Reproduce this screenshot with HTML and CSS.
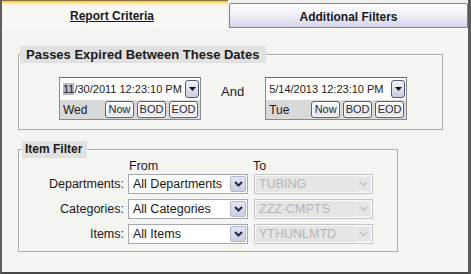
FILE: index.html
```html
<!DOCTYPE html>
<html lang="en">
<head>
    <meta charset="UTF-8">
    <title>Report Criteria</title>
    <link rel="stylesheet" href="styles.css">
</head>
<body>
    <div class="window">
        <div class="tabs">
            <div class="tab tab-active"><span>Report Criteria</span></div>
            <div class="tab">Additional Filters</div>
        </div>
        <div class="panel">
            <fieldset class="group group-dates">
                <legend>Passes Expired Between These Dates</legend>
                <div class="date-row">
                    <div class="datepicker">
                        <div class="dp-input">
                            <span class="dp-text"><span class="dp-sel">11</span>/30/2011 12:23:10 PM</span>
                            <span class="dp-drop"><svg width="7" height="4" viewBox="0 0 7 4"><path d="M0 0H7L3.5 4Z" fill="#111"/></svg></span>
                        </div>
                        <div class="dp-bar">
                            <span class="dp-day">Wed</span>
                            <span class="btn">Now</span><span class="btn">BOD</span><span class="btn">EOD</span>
                        </div>
                    </div>
                    <span class="and">And</span>
                    <div class="datepicker">
                        <div class="dp-input">
                            <span class="dp-text">5/14/2013 12:23:10 PM</span>
                            <span class="dp-drop"><svg width="7" height="4" viewBox="0 0 7 4"><path d="M0 0H7L3.5 4Z" fill="#111"/></svg></span>
                        </div>
                        <div class="dp-bar">
                            <span class="dp-day">Tue</span>
                            <span class="btn">Now</span><span class="btn">BOD</span><span class="btn">EOD</span>
                        </div>
                    </div>
                </div>
            </fieldset>

            <fieldset class="group group-items">
                <legend>Item Filter</legend>
                <div class="filter-grid">
                    <span></span><span class="col-head">From</span><span class="col-head">To</span>

                    <span class="row-label">Departments:</span>
                    <div class="combo"><span>All Departments</span><span class="combo-btn"><svg width="9" height="6" viewBox="0 0 9 6"><path d="M1 1L4.5 4.5L8 1" fill="none" stroke="currentColor" stroke-width="2"/></svg></span></div>
                    <div class="combo combo-disabled"><span>TUBING</span><span class="combo-btn"><svg width="9" height="6" viewBox="0 0 9 6"><path d="M1 1L4.5 4.5L8 1" fill="none" stroke="currentColor" stroke-width="1.5"/></svg></span></div>

                    <span class="row-label">Categories:</span>
                    <div class="combo"><span>All Categories</span><span class="combo-btn"><svg width="9" height="6" viewBox="0 0 9 6"><path d="M1 1L4.5 4.5L8 1" fill="none" stroke="currentColor" stroke-width="2"/></svg></span></div>
                    <div class="combo combo-disabled"><span>ZZZ-CMPTS</span><span class="combo-btn"><svg width="9" height="6" viewBox="0 0 9 6"><path d="M1 1L4.5 4.5L8 1" fill="none" stroke="currentColor" stroke-width="1.5"/></svg></span></div>

                    <span class="row-label">Items:</span>
                    <div class="combo"><span>All Items</span><span class="combo-btn"><svg width="9" height="6" viewBox="0 0 9 6"><path d="M1 1L4.5 4.5L8 1" fill="none" stroke="currentColor" stroke-width="2"/></svg></span></div>
                    <div class="combo combo-disabled"><span>YTHUNLMTD</span><span class="combo-btn"><svg width="9" height="6" viewBox="0 0 9 6"><path d="M1 1L4.5 4.5L8 1" fill="none" stroke="currentColor" stroke-width="1.5"/></svg></span></div>
                </div>
            </fieldset>
        </div>
    </div>
</body>
</html>
```

FILE: styles.css
```css
body {
    margin: 0;
    font-family: "Liberation Sans", Arial, sans-serif;
    color: #1a1a1a;
    background-color: #f4f4f1;
}
.window {
    width: 471px;
    height: 274px;
    box-sizing: border-box;
    border-left: 2px solid #5e5e5e;
    border-right: 3px solid #5a5a5a;
    border-bottom: 2px solid #474747;
    display: flex;
    flex-direction: column;
    background-color: #f4f4f1;
}

/* tabs */
.tabs {
    display: flex;
    height: 28px;
    background-color: #efefef;
}
.tab {
    flex: 1;
    margin-top: 3px;
    box-sizing: border-box;
    border: 1px solid #80808f;
    border-radius: 2px 2px 0 0;
    background: linear-gradient(#fdfdff 0%, #f1f1f9 45%, #d4d4ea 100%);
    box-shadow: 0 1px 0 #fff;
    display: flex;
    align-items: center;
    justify-content: center;
    padding-top: 2px;
    font-size: 12px;
    font-weight: bold;
}
.tab-active {
    flex: none;
    width: 226px;
    margin-top: 0;
    border: none;
    border-top: 1px solid #86703c;
    border-radius: 0;
    background: #f8f8f6;
    box-shadow: inset 0 2px 0 #f5d170, inset 0 4px 2px #fbeec4;
    padding: 3px 6px 0 0;
    margin-right: 1px;
}
.tab-active span {
    text-decoration: underline;
}

/* main panel */
.panel {
    flex: 1;
    padding: 18px 0 0 16px;
}
.group {
    margin: 0;
    padding: 0;
    border: 1px solid #ababab;
    box-shadow: inset 1px 1px 0 #fff;
}
.group legend {
    font-weight: bold;
    line-height: 17px;
    background-color: #e1e1e1;
}
.group-dates {
    width: 425px;
    box-sizing: border-box;
}
.group-dates legend {
    font-size: 13px;
    margin-left: 1px;
    padding: 0 7px 0 6px;
}
.group-items {
    width: 380px;
    box-sizing: border-box;
    margin-top: 11px;
}
.group-items legend {
    font-size: 12px;
    margin-left: 3px;
    padding: 0 5px 0 3px;
}

/* date pickers */
.date-row {
    display: flex;
    align-items: flex-start;
    padding: 14px 0 9px 40px;
}
.datepicker {
    width: 142px;
    box-sizing: border-box;
    border: 1px solid #8a8a8a;
    border-top-color: #6c6c6c;
}
.dp-input {
    height: 22px;
    display: flex;
    align-items: center;
    padding: 0 1px 0 3px;
    background-color: #fff;
    font-size: 11px;
}
.dp-sel {
    background-color: #b9b9c2;
}
.dp-drop {
    margin-left: auto;
    width: 14px;
    height: 18px;
    box-sizing: border-box;
    border: 1px solid #4d5d7a;
    border-radius: 3px;
    background: linear-gradient(#f3f3fa, #c9cce0);
    display: flex;
    align-items: center;
    justify-content: center;
}
.dp-bar {
    height: 19px;
    display: flex;
    align-items: center;
    padding: 0 2px 0 3px;
    background-color: #d9d9d9;
    font-size: 12px;
}
.dp-day {
    margin-right: auto;
}
.btn {
    width: 29px;
    height: 17px;
    box-sizing: border-box;
    margin-left: 3px;
    border: 1px solid #4e6382;
    border-radius: 3px;
    background: linear-gradient(#f7f8fb, #e3e6ee);
    box-shadow: inset 0 0 0 1px #fff;
    font-size: 11px;
    line-height: 15px;
    text-align: center;
    color: #2a2a2a;
}
.and {
    margin: 7px 21px 0 20px;
    font-size: 13px;
}

/* item filter */
.filter-grid {
    display: grid;
    grid-template-columns: 105px 120px 121px;
    column-gap: 4px;
    padding-bottom: 2px;
    font-size: 12.5px;
}
.filter-grid > .combo:nth-child(3n) {
    margin-left: 2px;
}
.col-head {
    line-height: 16px;
    padding-left: 1px;
}
.row-label {
    text-align: right;
    line-height: 20px;
    margin-bottom: 5px;
}
.combo {
    height: 20px;
    box-sizing: border-box;
    margin-bottom: 5px;
    border: 1px solid #a3a8b2;
    background-color: #fff;
    display: flex;
    align-items: center;
    padding-left: 4px;
}
.combo-btn {
    margin-left: auto;
    margin-right: 1px;
    width: 16px;
    height: 16px;
    box-sizing: border-box;
    border: 1px solid #b4b8cc;
    border-radius: 2px;
    background: linear-gradient(#e4e6f0, #cbcee0);
    color: #1c2950;
    display: flex;
    align-items: center;
    justify-content: center;
}
.combo-disabled {
    background-color: #e5e5e5;
    border-color: #c4c4c4;
    box-shadow: inset 0 0 0 1px #fafafa;
    color: #b6b6b6;
}
.combo-disabled .combo-btn {
    background: #e5e5e5;
    border-color: #efefef;
    color: #c2c2c2;
}
```
